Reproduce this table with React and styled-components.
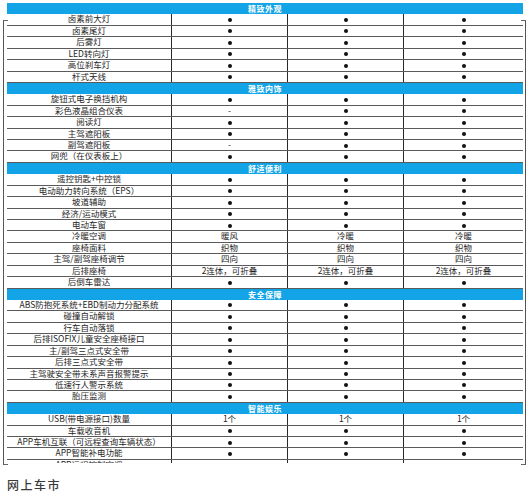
import React from "react";
import styled, { createGlobalStyle } from "styled-components";

const Global = createGlobalStyle`
  html, body { margin: 0; padding: 0; background: #fff; }
  body { font-family: "Noto Sans CJK SC", "Noto Sans", sans-serif; }
`;

const Page = styled.div`
  width: 530px;
  height: 500px;
  box-sizing: border-box;
  padding: 3px 7px 0 7px;
  overflow: hidden;
`;

const Frame = styled.div`
  position: relative;
  width: 516px;
  &::before, &::after {
    content: "";
    position: absolute;
    top: 17px;
    height: 443px;
    width: 4px;
    border-top: 1px solid #666;
    border-bottom: 1px solid #666;
  }
  &::before { left: -4px; border-left: 1px solid #555; }
  &::after { right: -3px; border-right: 1px solid #555; }
`;

const Table = styled.div`
  height: 460px;
  overflow: hidden;
  background: #fff;
`;

const Section = styled.div`
  height: 11.43px;
  background: #12a4e6;
  color: #fff;
  font-size: 8px;
  font-weight: 700;
  line-height: 11.43px;
  text-align: center;
  letter-spacing: 0.5px;
`;

const Row = styled.div`
  display: grid;
  grid-template-columns: 164px 116px 116px 120px;
  height: 11.43px;
  box-sizing: border-box;
  border-bottom: 1.5px solid #5a5a5a;
`;

const Cell = styled.div`
  font-size: 8.5px;
  line-height: 9.9px;
  color: #1e1e1e;
  text-align: center;
  white-space: nowrap;
  border-left: ${(p) => (p.$first ? "none" : "1px solid #2a2a2a")};
`;

const Dot = styled.span`
  display: inline-block;
  width: 4px;
  height: 4px;
  border-radius: 50%;
  background: #111;
  vertical-align: 0.5px;
`;

const Watermark = styled.div`
  margin-top: 15px;
  font-size: 12px;
  line-height: 14px;
  letter-spacing: 1.5px;
  color: #3a3a3a;
  font-weight: 500;
`;

const D = "●";
const all = [D, D, D];

const data = [
  ["精致外观", [
    ["卤素前大灯", all], ["卤素尾灯", all], ["后雾灯", all],
    ["LED转向灯", all], ["高位刹车灯", all], ["杆式天线", all],
  ]],
  ["雅致内饰", [
    ["旋钮式电子换挡机构", all], ["彩色液晶组合仪表", ["-", D, D]], ["阅读灯", all],
    ["主驾遮阳板", all], ["副驾遮阳板", ["-", D, D]], ["网兜（在仪表板上）", all],
  ]],
  ["舒适便利", [
    ["遥控钥匙+中控锁", all], ["电动助力转向系统（EPS）", all], ["坡道辅助", all],
    ["经济/运动模式", all], ["电动车窗", all], ["冷暖空调", ["暖风", "冷暖", "冷暖"]],
    ["座椅面料", ["织物", "织物", "织物"]], ["主驾/副驾座椅调节", ["四向", "四向", "四向"]],
    ["后排座椅", ["2连体，可折叠", "2连体，可折叠", "2连体，可折叠"]], ["后倒车雷达", all],
  ]],
  ["安全保障", [
    ["ABS防抱死系统+EBD制动力分配系统", all], ["碰撞自动解锁", all], ["行车自动落锁", all],
    ["后排ISOFIX儿童安全座椅接口", all], ["主/副驾三点式安全带", all], ["后排三点式安全带", all],
    ["主驾驶安全带未系声音报警提示", all], ["低速行人警示系统", all], ["胎压监测", all],
  ]],
  ["智能娱乐", [
    ["USB(带电源接口)数量", ["1个", "1个", "1个"]], ["车载收音机", all],
    ["APP车机互联（可远程查询车辆状态）", all], ["APP智能补电功能", all], ["APP远程控制空调", all],
  ]],
];

const Val = ({ v }) => (v === D ? <Dot /> : v);

export default function App() {
  return (
    <Page>
      <Global />
      <Frame>
        <Table>
          {data.map(([title, rows]) => (
            <React.Fragment key={title}>
              <Section>{title}</Section>
              {rows.map(([name, vals]) => (
                <Row key={name}>
                  <Cell $first>{name}</Cell>
                  {vals.map((v, i) => (
                    <Cell key={i}><Val v={v} /></Cell>
                  ))}
                </Row>
              ))}
            </React.Fragment>
          ))}
        </Table>
      </Frame>
      <Watermark>网上车市</Watermark>
    </Page>
  );
}
